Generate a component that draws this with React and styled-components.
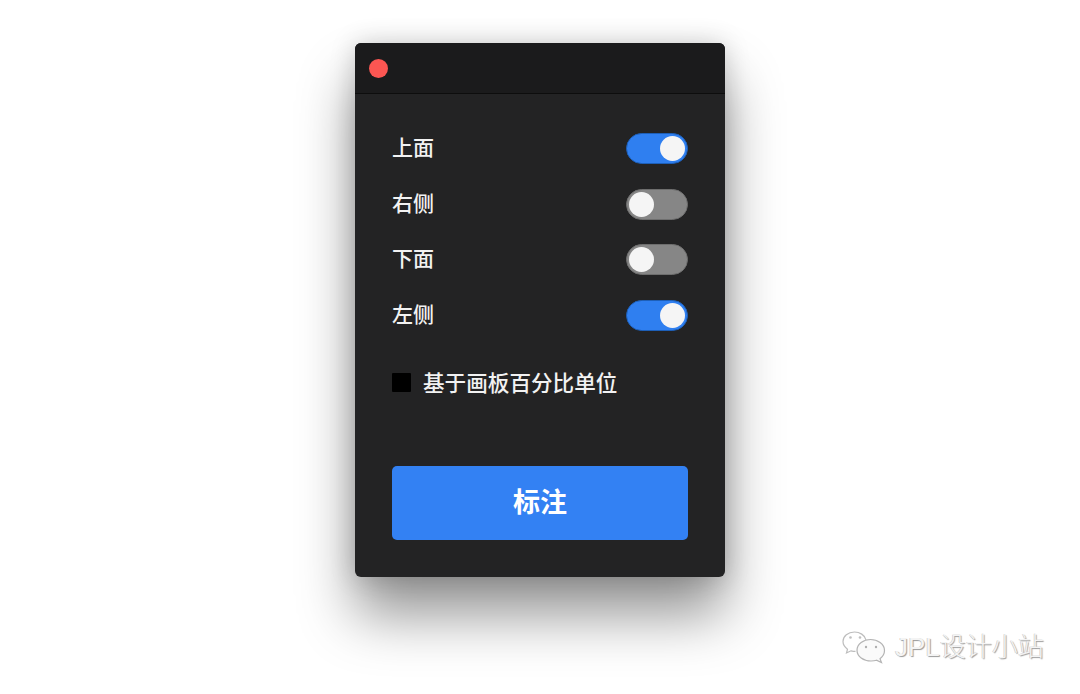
import React from "react";
import styled, { createGlobalStyle } from "styled-components";

const Global = createGlobalStyle`
  html, body {
    margin: 0;
    height: 100%;
    background: #fff;
    overflow: hidden;
  }
  body {
    font-family: "Noto Sans CJK SC", "Liberation Sans", sans-serif;
  }
`;

const Page = styled.div`
  position: relative;
  width: 1080px;
  height: 694px;
  padding-top: 43px;
  box-sizing: border-box;
  background: #fff;
  overflow: hidden;
`;

const Window = styled.div`
  width: 370px;
  height: 534px;
  margin: 0 auto;
  border-radius: 6px;
  background: #232324;
  display: flex;
  flex-direction: column;
  box-shadow: 0 38px 56px rgba(0, 0, 0, 0.42), 0 0 26px rgba(0, 0, 0, 0.18);
`;

const TitleBar = styled.div`
  height: 51px;
  flex: none;
  box-sizing: border-box;
  display: flex;
  align-items: center;
  padding-left: 14px;
  background: #1b1b1c;
  border-radius: 6px 6px 0 0;
  border-bottom: 1px solid #0d0d0d;
`;

const CloseDot = styled.span`
  width: 19px;
  height: 19px;
  border-radius: 50%;
  background: #fc5652;
`;

const Body = styled.div`
  flex: 1;
  display: flex;
  flex-direction: column;
  padding: 39px 37px 37px;
`;

const Rows = styled.div`
  display: flex;
  flex-direction: column;
  gap: 24.5px;
`;

const Row = styled.div`
  height: 31px;
  display: flex;
  align-items: center;
  justify-content: space-between;
`;

const Label = styled.span`
  font-size: 21px;
  font-weight: 500;
  line-height: 27px;
  padding-bottom: 4px;
  color: #f2f2f2;
`;

const Toggle = styled.span`
  width: 62px;
  height: 31px;
  border-radius: 16px;
  box-sizing: border-box;
  padding: 2px;
  display: flex;
  justify-content: ${(p) => (p.$on ? "flex-end" : "flex-start")};
  background: ${(p) => (p.$on ? "#2f7ff0" : "#868686")};
  border: ${(p) => (p.$on ? "1px solid #1d5fb8" : "1px solid #6e6e6e")};
`;

const Knob = styled.span`
  width: 25px;
  height: 25px;
  border-radius: 50%;
  background: #f5f5f5;
`;

const CheckRow = styled.div`
  margin-top: 36px;
  height: 31px;
  display: flex;
  align-items: center;
  gap: 12px;
`;

const CheckBox = styled.span`
  width: 19px;
  height: 19px;
  background: #000;
  border-radius: 1px;
`;

const CheckLabel = styled.span`
  font-size: 21.6px;
  font-weight: 500;
  line-height: 29px;
  padding-bottom: 2px;
  color: #f2f2f2;
`;

const Submit = styled.button`
  margin-top: auto;
  height: 74px;
  width: 100%;
  border: 0;
  border-radius: 5px;
  padding: 0 0 5px;
  background: #3381f3;
  color: #fff;
  font-family: inherit;
  font-size: 27px;
  font-weight: 700;
`;

const Watermark = styled.div`
  position: absolute;
  left: 842px;
  top: 630px;
  display: flex;
  align-items: center;
  gap: 8px;
`;

const WatermarkText = styled.span`
  font-family: "Liberation Sans", "Noto Sans CJK SC", sans-serif;
  font-size: 26px;
  font-weight: 300;
  line-height: 34px;
  color: #f4f4f4;
  text-shadow: 1px 1px 1px #9a9a9a, -0.5px -0.5px 0 #c4c4c4;
`;

const WeChatMark = () => (
  <svg width="45" height="34" viewBox="0 0 45 34" fill="none">
    <path
      d="M24 10C23 5 17.500 2 12.500 2C6 2 1 6.300 1 11.500C1 14.800 2.800 17.200 5.500 19.200L4.500 23L9 20.800C10.500 21.200 11.800 21.400 13.500 21.400"
      stroke="#bdbdbd"
      strokeWidth="1.200"
    />
    <path
      d="M28.500 9.500C35.500 9.500 42.500 14 42.500 20.500C42.500 24 40.500 26.800 38 28.800L39.500 32.500L34.500 30.200C33 30.700 31 31 29 31C21.500 31 15 26.500 15 20.300C15 14 21.500 9.500 28.500 9.500Z"
      fill="#fafafa"
      stroke="#b4b4b4"
      strokeWidth="1.200"
    />
    <circle cx="8.500" cy="7.500" r="1.300" fill="#c0c0c0" />
    <circle cx="18" cy="7.500" r="1.300" fill="#c0c0c0" />
    <circle cx="24" cy="17" r="1.200" fill="#b0b0b0" />
    <circle cx="34" cy="17" r="1.200" fill="#b0b0b0" />
  </svg>
);

const sides = [
  { label: "上面", on: true },
  { label: "右侧", on: false },
  { label: "下面", on: false },
  { label: "左侧", on: true },
];

export default function App() {
  return (
    <Page>
      <Global />
      <Window>
        <TitleBar>
          <CloseDot />
        </TitleBar>
        <Body>
          <Rows>
            {sides.map((s) => (
              <Row key={s.label}>
                <Label>{s.label}</Label>
                <Toggle $on={s.on}>
                  <Knob />
                </Toggle>
              </Row>
            ))}
          </Rows>
          <CheckRow>
            <CheckBox />
            <CheckLabel>基于画板百分比单位</CheckLabel>
          </CheckRow>
          <Submit>标注</Submit>
        </Body>
      </Window>
      <Watermark>
        <WeChatMark />
        <WatermarkText>JPL设计小站</WatermarkText>
      </Watermark>
    </Page>
  );
}
